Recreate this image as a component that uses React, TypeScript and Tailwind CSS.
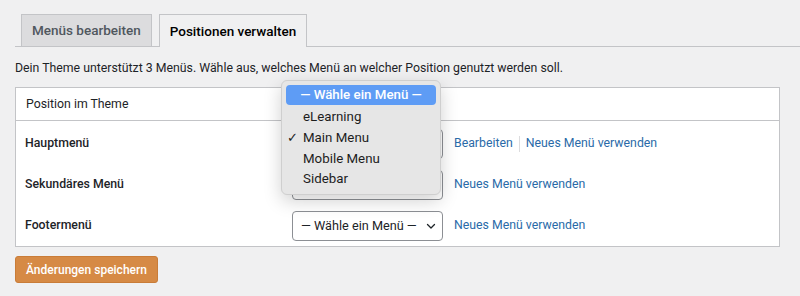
import React from "react";

const rows = [
  { label: "Hauptmenü", value: "Main Menu", edit: true },
  { label: "Sekundäres Menü", value: "— Wähle ein Menü —", edit: false },
  { label: "Footermenü", value: "— Wähle ein Menü —", edit: false },
];

const options = ["eLearning", "Main Menu", "Mobile Menu", "Sidebar"];

const Chevron = () => (
  <svg width="12" height="12" viewBox="0 0 12 12" fill="none">
    <path d="M2.5 4.5 6 8l3.5-3.5" stroke="#1d2327" strokeWidth="1.3" strokeLinecap="round" strokeLinejoin="round" />
  </svg>
);

export default function App() {
  return (
    <div
      className="w-[800px] h-[296px] bg-[#f0f0f1] text-[12.3px] text-[#1d2327] overflow-hidden"
      style={{ fontFamily: "Roboto, 'Liberation Sans', sans-serif" }}
    >
      {/* tabs */}
      <div className="flex gap-[7px] pl-[6px] pt-[14px] ml-[15px] border-b border-[#c3c4c7]">
        <div className="h-[32px] px-[10px] flex items-center bg-[#dcdcde] border border-b-0 border-[#c3c4c7] text-[13.5px] font-medium text-[#50575e] -mb-px">
          Menüs bearbeiten
        </div>
        <div className="h-[33px] px-[10px] flex items-center bg-[#f0f0f1] border border-b-0 border-[#c3c4c7] text-[13.5px] font-medium text-black -mb-px">
          Positionen verwalten
        </div>
      </div>

      <p className="px-[15px] mt-[12px] leading-[18px]">
        Dein Theme unterstützt 3 Menüs. Wähle aus, welches Menü an welcher Position genutzt werden soll.
      </p>

      <div className="relative mx-[15px] mt-[10px] w-[765px]">
        <div className="bg-white border border-[#c3c4c7]">
          <div className="h-[33px] px-[10px] flex items-center border-b border-[#c3c4c7]">Position im Theme</div>
          <div className="pt-[2px]">
            {rows.map((r) => (
              <div key={r.label} className="h-[41px] flex items-center">
                <div className="w-[276px] pl-[9px] font-medium">{r.label}</div>
                <div className="w-[151px] h-[30px] border border-[#8c8f94] rounded-[4px] bg-white flex items-center justify-between pl-[8px] pr-[5px] text-[12.7px] whitespace-nowrap">
                  <span>{r.value}</span>
                  <Chevron />
                </div>
                <div className="ml-[11px] flex items-center text-[#2a6aa8]">
                  {r.edit && (
                    <>
                      <span>Bearbeiten</span>
                      <span className="mx-[6px] w-px h-[16px] bg-[#dcdcde]" />
                    </>
                  )}
                  <span>Neues Menü verwenden</span>
                </div>
              </div>
            ))}
          </div>
        </div>

        {/* open select popup */}
        <div className="absolute left-[266px] top-[-7px] w-[160px] h-[115px] rounded-[6px] bg-[#e6e6e6] border border-[#cfcfcf] shadow-[0_6px_18px_rgba(0,0,0,0.18)] p-[4px] text-[13.3px]">
          <div className="h-[20px] rounded-[4px] bg-[#5e9cf5] text-white font-medium flex items-center justify-center whitespace-nowrap">
            — Wähle ein Menü —
          </div>
          <div className="pt-[2px]">
            {options.map((o) => (
              <div key={o} className="h-[20.7px] flex items-center relative pl-[17px] text-[#1d1d1d]">
                {o === "Main Menu" && <span className="absolute left-[1px]">✓</span>}
                {o}
              </div>
            ))}
          </div>
        </div>
      </div>

      <div className="px-[15px] mt-[9px]">
        <button className="h-[27px] px-[10px] rounded-[3px] bg-[#d68a45] text-white text-[12px] font-medium border border-[#c97c38]">
          Änderungen speichern
        </button>
      </div>
    </div>
  );
}
